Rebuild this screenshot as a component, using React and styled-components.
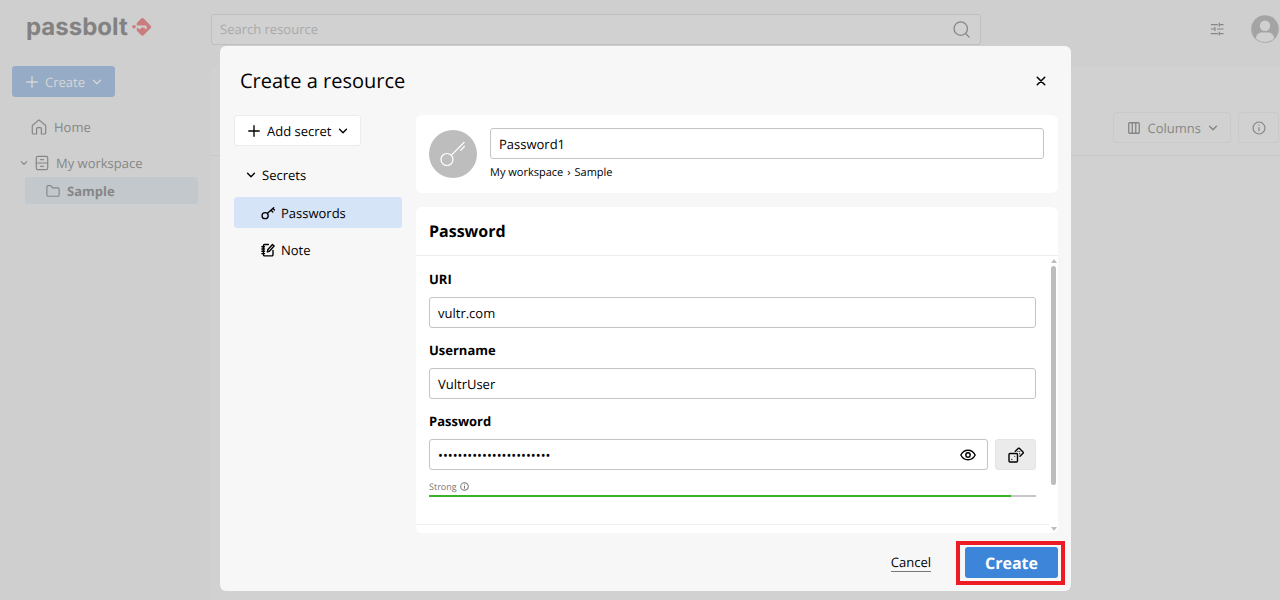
import { useState } from 'react';
import styled, { createGlobalStyle } from 'styled-components';

const GlobalStyle = createGlobalStyle`
	* {
		box-sizing: border-box;
	}

	body {
		margin: 0;
		background: #cfcfcf;
		color: #000;
		font-family: 'Open Sans', 'Noto Sans', sans-serif;
		font-size: 13px;
		line-height: 20px;
		text-rendering: geometricPrecision;
	}

	button,
	input {
		font: inherit;
		color: inherit;
		text-rendering: inherit;
	}

	a {
		color: inherit;
		text-decoration: none;
	}

	h1,
	h2 {
		margin: 0;
	}
`;

/* icons */

const Svg = styled.svg`
	display: block;
	flex: none;
	fill: none;
	stroke: currentColor;
	stroke-linecap: round;
	stroke-linejoin: round;
`;

const Icon = ({ size = 16, stroke = 1.2, children }) => (
	<Svg width={size} height={size} viewBox="0 0 16 16" strokeWidth={stroke} aria-hidden="true">
		{children}
	</Svg>
);

const PlusIcon = () => (
	<Icon size={12} stroke={1.8}>
		<path d="M8 1v14M1 8h14" />
	</Icon>
);

const CaretIcon = ({ size = 10 }) => (
	<Icon size={size} stroke={2.2}>
		<path d="M2.5 5.2 8 10.8l5.5-5.6" />
	</Icon>
);

const SearchIcon = () => (
	<Icon size={17} stroke={1.2}>
		<circle cx="7.3" cy="7.2" r="6.3" />
		<path d="m12 12 3.2 3.2" />
	</Icon>
);

const SlidersIcon = () => (
	<Icon size={14} stroke={1.4}>
		<path
			strokeLinecap="butt"
			d="M1 3h8M11 3h4.500M10.600.8v4.400M1 8h4.500M8 8h7.500M5.600 5.800v4.400M1 13.200h8M11 13.200h4.500M10.600 11v4.400"
		/>
	</Icon>
);

const AvatarIcon = () => (
	<svg width="28" height="28" viewBox="0 0 28 28" aria-hidden="true">
		<circle cx="14" cy="14" r="13.8" fill="#a4a4a4" />
		<circle cx="14" cy="10.8" r="5.2" fill="#d0d0d0" />
		<path d="M5 23.4c0-4 3.2-5.9 6.2-5.9h5.6c3 0 6.2 1.9 6.2 5.9-2.3 2.4-5.6 3.5-9 3.5s-6.7-1.1-9-3.5Z" fill="#d0d0d0" />
	</svg>
);

const LogoMark = () => (
	<svg width="20" height="20" viewBox="0 0 20 20" aria-hidden="true">
		<path
			d="M9 1.700a2 2 0 0 1 2.900 0l6.600 6.700a2 2 0 0 1 0 2.900L11.900 18a2 2 0 0 1-2.900 0l-4.200-4.300V6Z"
			fill="#c97d7d"
		/>
		<path d="M4 8.400h9.600a1 1 0 0 1 1 1v2.500h-1.900v-1.300H9.500L8.300 12H6.800l-.9-1.300H4Z" fill="#cfcfcf" />
		<circle cx="2" cy="9.800" r="1.800" fill="#c97d7d" />
	</svg>
);

const HomeIcon = () => (
	<Icon stroke={1.2}>
		<path d="M5.6 15H2.5a1.2 1.2 0 0 1-1.2-1.2V6.500L8 .9l6.700 5.600v7.300a1.200 1.200 0 0 1-1.200 1.200h-3.100V9.700a1 1 0 0 0-1-1H6.600a1 1 0 0 0-1 1Z" />
	</Icon>
);

const DrawerIcon = () => (
	<Icon stroke={1.2}>
		<rect x="2.3" y="1.3" width="11.4" height="13.4" rx="1.6" />
		<path d="M2.3 8h11.400M6.600 4.600h2.800M6.600 11.300h2.800" />
	</Icon>
);

const FolderIcon = () => (
	<Icon size={14} stroke={1.3}>
		<path d="M1 3.200A1.300 1.300 0 0 1 2.300 1.900h3.200l2 2.500h6.200A1.300 1.300 0 0 1 15 5.700v7a1.300 1.300 0 0 1-1.300 1.300H2.300A1.300 1.300 0 0 1 1 12.700Z" />
	</Icon>
);

const ColumnsIcon = () => (
	<Icon size={14} stroke={1.5}>
		<rect x="2" y="2" width="12" height="12" rx="1" />
		<path d="M6 2v12M10 2v12" />
	</Icon>
);

const InfoIcon = ({ size = 14, stroke = 1.3 }) => (
	<Icon size={size} stroke={stroke}>
		<circle cx="8" cy="8" r="6.8" />
		<path d="M8 7.400v3.800M8 4.700v.2" />
	</Icon>
);

const CloseIcon = () => (
	<Icon size={10} stroke={2.4}>
		<path d="m2 2 12 12M14 2 2 14" />
	</Icon>
);

const KeyIcon = () => (
	<Icon size={14} stroke={1.5}>
		<circle cx="4.7" cy="11" r="3.500" />
		<path d="M7.400 8.400 14.500 2M11.500 4.700l2 2.200M13.500 2.900l1.900 1.700" />
	</Icon>
);

const LargeKeyIcon = () => (
	<Svg width="26" height="26" viewBox="0 0 26 26" strokeWidth="1.2" aria-hidden="true">
		<circle cx="7" cy="18.5" r="6" />
		<path d="M11.400 14.100 24 1.500M20.600 9.300l3.800-3.800" />
	</Svg>
);

const NoteIcon = () => (
	<Icon size={14} stroke={1.6}>
		<path d="M8.500 1.700H4A1.200 1.200 0 0 0 2.800 2.900v10.600A1.200 1.200 0 0 0 4 14.700h8.500a1.200 1.200 0 0 0 1.200-1.200V8.500M1 4.300h3M1 6.900h3M1 9.500h3M1 12.100h3M7.300 10.200l.4-2.500 5.400-6 1.900 1.700-5.400 6Z" />
	</Icon>
);

const EyeIcon = () => (
	<Icon stroke={1.4}>
		<path d="M.8 8C2.300 5.200 5 3.200 8 3.200S13.700 5.200 15.200 8C13.700 10.800 11 12.800 8 12.800S2.300 10.800.8 8Z" />
		<circle cx="8" cy="8" r="2.2" />
	</Icon>
);

const DiceIcon = () => (
	<Icon stroke={1.4}>
		<rect x="1" y="6.500" width="8.500" height="8.500" rx="1" />
		<path d="m7.300 4.200 2.900-2.800a1 1 0 0 1 1.300 0l3.500 3.500a1 1 0 0 1 0 1.300L12 9.200" />
		<path strokeWidth="1.1" d="M3.800 12.300v.1M6.800 9.200v.1M9.800 4.500h.1M11.700 4.500v.1M11.700 6.600v.1" />
	</Icon>
);

/* page behind the dialog */

const Page = styled.div`
	display: grid;
	grid-template-columns: 211px 1fr;
	grid-template-rows: 66px 1fr;
	min-height: 100vh;
	color: #868686;
`;

const Logo = styled.a`
	display: flex;
	align-items: center;
	gap: 4px;
	padding: 0 0 12px 26px;
	color: #828282;
	font-family: Inter, sans-serif;
	font-size: 24px;
	font-weight: 700;
`;

const TopBar = styled.header`
	display: flex;
	align-items: center;
	padding: 0 1px 8px 0;
`;

const SearchBox = styled.label`
	display: flex;
	align-items: center;
	flex: 0 1 770px;
	height: 31px;
	padding: 0 10px 0 8px;
	border: 1px solid #bfbfbf;
	border-radius: 3px;
	background: #d1d1d1;

	& input {
		flex: 1;
		min-width: 0;
		padding: 0;
		border: 0;
		outline: 0;
		background: none;
	}

	& input::placeholder {
		color: #a9a9a9;
		opacity: 1;
	}
`;

const UserTools = styled.div`
	display: flex;
	align-items: center;
	gap: 27px;
	margin-left: auto;
`;

const PlainButton = styled.button`
	display: flex;
	align-items: center;
	justify-content: center;
	padding: 0;
	border: 0;
	background: none;
`;

const Sidebar = styled.aside`
	padding: 0 13px 0 12px;
`;

const OutlineButton = styled.button`
	display: flex;
	align-items: center;
	gap: 7px;
	height: 31px;
	padding: 0 12px 0 13px;
	border: 1px solid ${({ $border = '#cacaca' }) => $border};
	border-radius: 3px;
	background: ${({ $background = 'none' }) => $background};
	color: ${({ $color = 'inherit' }) => $color};
`;

const FolderTree = styled.nav`
	display: flex;
	flex-direction: column;
	padding: 16px 0 0 8px;
`;

const TreeLink = styled.a`
	display: flex;
	align-items: center;
	gap: ${({ $gap = 7 }) => $gap}px;
	height: 27px;
	margin: 0 0 ${({ $after = 0 }) => $after}px ${({ $indent = 0 }) => $indent}px;
	padding-left: ${({ $pad = 0 }) => $pad}px;
	border-radius: 3px;
	background: ${({ $active }) => ($active ? '#c3c8cc' : 'none')};
	font-weight: ${({ $active }) => ($active ? 700 : 400)};
`;

const Workspace = styled.main`
	border-radius: 8px 0 0 0;
	background: #d1d1d1;
`;

const WorkspaceBar = styled.div`
	display: flex;
	justify-content: flex-end;
	gap: 7px;
	padding: 46px 1px 12px;
	border-bottom: 1px solid #c9c9c9;
`;

/* dialog */

const Overlay = styled.div`
	position: fixed;
	inset: 0;
	display: flex;
	justify-content: center;
	align-items: flex-start;
	padding: 46px 0 0 11px;
`;

const Dialog = styled.form`
	width: 100%;
	max-width: 851px;
	padding: 0 13px 6px 14px;
	border-radius: 6px;
	background: #f7f7f7;
`;

const DialogHeader = styled.header`
	display: flex;
	align-items: center;
	justify-content: space-between;
	height: 69px;
	padding: 0 12px 0 6px;

	& h1 {
		font-size: 20px;
		font-weight: 400;
		line-height: 28px;
	}
`;

const DialogBody = styled.div`
	display: grid;
	grid-template-columns: 168px 1fr;
	gap: 14px;
`;

const SecretNav = styled.nav`
	display: flex;
	flex-direction: column;
	align-items: flex-start;
`;

const SecretGroup = styled.button`
	display: flex;
	align-items: center;
	gap: 6px;
	margin: 14px 0 7px;
	padding: 5px 12px;
	border: 0;
	background: none;
`;

const SecretLink = styled.a`
	display: flex;
	align-items: center;
	gap: 6px;
	width: 100%;
	height: 31px;
	margin-bottom: 6px;
	padding-left: 27px;
	border-radius: 3px;
	background: ${({ $active }) => ($active ? '#d5e4f7' : 'none')};
`;

const Column = styled.div`
	display: flex;
	flex-direction: column;
	gap: 14px;
	min-width: 0;
`;

const Card = styled.section`
	border-radius: 6px;
	background: #fff;
`;

const ResourceCard = styled(Card)`
	display: flex;
	align-items: center;
	gap: 13px;
	padding: 13px 14px 10px 13px;
`;

const ResourceBadge = styled.div`
	display: flex;
	align-items: center;
	justify-content: center;
	flex: none;
	width: 48px;
	height: 48px;
	margin-bottom: 3px;
	border-radius: 50%;
	background: #bdbdbd;
	color: #fff;
`;

const ResourceName = styled.div`
	flex: 1;
	min-width: 0;
`;

const Breadcrumb = styled.div`
	display: flex;
	gap: 4px;
	padding-top: 4px;
	font-size: 11px;
`;

const TextInput = styled.input`
	display: block;
	width: 100%;
	min-width: 0;
	height: 31px;
	padding: 0 8px;
	border: 1px solid #c4c4c4;
	border-radius: 3px;
	outline: 0;
	background: #fff;
`;

const CardTitle = styled.h2`
	padding: 12px 13px;
	border-bottom: 1px solid #ededed;
	font-size: 16px;
	font-weight: 700;
	line-height: 24px;
`;

const ScrollArea = styled.div`
	display: flex;
`;

const Fields = styled.div`
	flex: 1;
	min-width: 0;
	padding-bottom: 8px;
`;

const FieldList = styled.div`
	display: flex;
	flex-direction: column;
	gap: 12px;
	padding: 13px 13px 27px 13px;
	border-bottom: 1px solid #f0f0f0;
`;

const Field = styled.div`
	& > label {
		display: block;
		margin-bottom: 8px;
		font-weight: 700;
	}
`;

const PasswordRow = styled.div`
	display: flex;
	gap: 7px;
`;

const PasswordBox = styled.div`
	display: flex;
	flex: 1;
	align-items: center;
	height: 31px;
	padding-right: 11px;
	border: 1px solid #c4c4c4;
	border-radius: 3px;

	& input {
		height: 29px;
		border: 0;
		background: none;
	}
`;

const GenerateButton = styled(PlainButton)`
	width: 41px;
	height: 31px;
	border: 1px solid #e4e4e4;
	border-radius: 3px;
	background: #ebebeb;
`;

const Strength = styled.div`
	display: flex;
	align-items: center;
	gap: 3px;
	padding: 10px 0 2px;
	color: #767676;
	font-size: 9px;
	line-height: 13px;
`;

const StrengthTrack = styled.div`
	height: 2px;
	background: #c6c6c6;
`;

const StrengthBar = styled.div`
	height: 2px;
	background: #3bb02a;
`;

const ScrollTrack = styled.div`
	display: flex;
	flex-direction: column;
	align-items: center;
	justify-content: space-between;
	width: 9px;
	padding: 3px 0 2px;
	color: #bdbdbd;
`;

const ScrollThumb = styled.div`
	flex: 1;
	width: 5px;
	margin: 3px 0 42px;
	border-radius: 3px;
	background: #bdbdbd;
`;

const ScrollArrow = ({ d }) => (
	<svg width="6" height="4" viewBox="0 0 6 4" fill="currentColor" aria-hidden="true">
		<path d={d} />
	</svg>
);

const DialogFooter = styled.footer`
	display: flex;
	align-items: center;
	justify-content: flex-end;
	gap: 25px;
	margin-right: -7px;
	padding-top: 8px;
`;

const CancelLink = styled.a`
	border-bottom: 1px solid #777;
	line-height: 17px;
`;

const Highlight = styled.div`
	padding: 2px 3px 3px 5px;
	border: 4px solid #ed1c24;
`;

const SubmitButton = styled.button`
	display: block;
	height: 31px;
	padding: 0 20px;
	border: 0;
	border-radius: 3px;
	background: #3d85d9;
	color: #fff;
	font-size: 16px;
	font-weight: 700;
`;

const SECRETS = [
	{ id: 'passwords', title: 'Passwords', icon: <KeyIcon /> },
	{ id: 'note', title: 'Note', icon: <NoteIcon /> },
];

const TextField = ({ id, label, value, onChange }) => (
	<Field>
		<label htmlFor={id}>{label}</label>
		<TextInput id={id} name={id} value={value} onChange={onChange} />
	</Field>
);

const Workbench = () => (
	<Page>
		<Logo href="#home">
			passbolt
			<LogoMark />
		</Logo>
		<TopBar>
			<SearchBox>
				<input type="search" placeholder="Search resource" aria-label="Search resource" />
				<SearchIcon />
			</SearchBox>
			<UserTools>
				<PlainButton type="button" aria-label="Settings">
					<SlidersIcon />
				</PlainButton>
				<PlainButton type="button" aria-label="Profile">
					<AvatarIcon />
				</PlainButton>
			</UserTools>
		</TopBar>
		<Sidebar>
			<OutlineButton type="button" $background="#96abc6" $border="#96abc6" $color="#d6d6d6">
				<PlusIcon />
				Create
				<CaretIcon />
			</OutlineButton>
			<FolderTree>
				<TreeLink href="#home" $pad={11} $after={9}>
					<HomeIcon />
					Home
				</TreeLink>
				<TreeLink href="#workspace" $gap={6} $after={1}>
					<CaretIcon size={8} />
					<DrawerIcon />
					My workspace
				</TreeLink>
				<TreeLink href="#sample" $active $indent={5} $pad={21}>
					<FolderIcon />
					Sample
				</TreeLink>
			</FolderTree>
		</Sidebar>
		<Workspace>
			<WorkspaceBar>
				<OutlineButton type="button">
					<ColumnsIcon />
					Columns
					<CaretIcon />
				</OutlineButton>
				<OutlineButton type="button" aria-label="Details">
					<InfoIcon />
				</OutlineButton>
			</WorkspaceBar>
		</Workspace>
	</Page>
);

const App = () => {
	const [resource, setResource] = useState({
		name: 'Password1',
		uri: 'vultr.com',
		username: 'VultrUser',
		password: 'k3Vw9!tRz0pLq7#sXe2Bn5m',
	});
	const [secret, setSecret] = useState('passwords');
	const [isShown, setIsShown] = useState(false);

	const strength = Math.min(resource.password.length / 24, 1) * 100;

	const onChange = ({ target }) => {
		setResource({ ...resource, [target.name]: target.value });
	};

	const onSubmit = (event) => {
		event.preventDefault();
	};

	return (
		<>
			<GlobalStyle />
			<Workbench />
			<Overlay>
				<Dialog role="dialog" aria-labelledby="dialog-title" onSubmit={onSubmit}>
					<DialogHeader>
						<h1 id="dialog-title">Create a resource</h1>
						<PlainButton type="button" aria-label="Close">
							<CloseIcon />
						</PlainButton>
					</DialogHeader>
					<DialogBody>
						<SecretNav>
							<OutlineButton type="button" $background="#fff" $border="#ececec">
								<PlusIcon />
								Add secret
								<CaretIcon />
							</OutlineButton>
							<SecretGroup type="button">
								<CaretIcon />
								Secrets
							</SecretGroup>
							{SECRETS.map(({ id, title, icon }) => (
								<SecretLink
									key={id}
									href={`#${id}`}
									$active={id === secret}
									onClick={() => setSecret(id)}
								>
									{icon}
									{title}
								</SecretLink>
							))}
						</SecretNav>
						<Column>
							<ResourceCard>
								<ResourceBadge>
									<LargeKeyIcon />
								</ResourceBadge>
								<ResourceName>
									<TextInput
										name="name"
										aria-label="Name"
										value={resource.name}
										onChange={onChange}
									/>
									<Breadcrumb>
										<span>My workspace</span>
										<span>›</span>
										<span>Sample</span>
									</Breadcrumb>
								</ResourceName>
							</ResourceCard>
							<Card>
								<CardTitle>Password</CardTitle>
								<ScrollArea>
									<Fields>
										<FieldList>
											<TextField id="uri" label="URI" value={resource.uri} onChange={onChange} />
											<TextField
												id="username"
												label="Username"
												value={resource.username}
												onChange={onChange}
											/>
											<Field>
												<label htmlFor="password">Password</label>
												<PasswordRow>
													<PasswordBox>
														<TextInput
															id="password"
															name="password"
															type={isShown ? 'text' : 'password'}
															value={resource.password}
															onChange={onChange}
														/>
														<PlainButton
															type="button"
															aria-label="Show password"
															onClick={() => setIsShown(!isShown)}
														>
															<EyeIcon />
														</PlainButton>
													</PasswordBox>
													<GenerateButton type="button" aria-label="Generate password">
														<DiceIcon />
													</GenerateButton>
												</PasswordRow>
												<Strength>
													Strong
													<InfoIcon size={9} stroke={1.8} />
												</Strength>
												<StrengthTrack>
													<StrengthBar style={{ width: `${strength}%` }} />
												</StrengthTrack>
											</Field>
										</FieldList>
									</Fields>
									<ScrollTrack>
										<ScrollArrow d="M3 0 6 4H0Z" />
										<ScrollThumb />
										<ScrollArrow d="M0 0h6L3 4Z" />
									</ScrollTrack>
								</ScrollArea>
							</Card>
						</Column>
					</DialogBody>
					<DialogFooter>
						<CancelLink href="#cancel">Cancel</CancelLink>
						<Highlight>
							<SubmitButton type="submit">Create</SubmitButton>
						</Highlight>
					</DialogFooter>
				</Dialog>
			</Overlay>
		</>
	);
};

export default App;
